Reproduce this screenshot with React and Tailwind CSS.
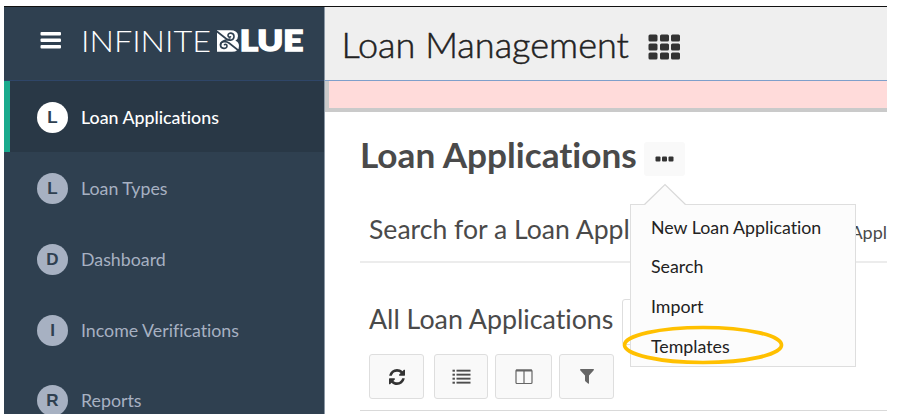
const navItems = [
  { letter: "L", label: "Loan Types", height: "h-[71px]" },
  { letter: "D", label: "Dashboard", height: "h-[70px]" },
  { letter: "I", label: "Income Verifications", height: "h-[72px]" },
  { letter: "R", label: "Reports", height: "h-[69px]" },
];

function Logo() {
  return (
    <svg width="230" height="44" viewBox="0 -8 230 44" className="-mt-[8px] ml-[19px] block overflow-visible" fill="#fff">
      <text x="0" y="24.5" fontFamily="Lato, sans-serif" fontWeight="300" fontSize="30" textLength="130" lengthAdjust="spacingAndGlyphs">INFINITE</text>
      <path d="M136 3.300H149q8 0 8 5.700 0 3.500-2.600 4.700 3.600 1.300 3.600 5.300 0 5.800-7 5.800h-15z" />
      <g fill="none" stroke="#2f4050" strokeWidth="1.600" strokeLinecap="round">
        <path d="M136 4.500l9.500 7.500c3 2.300 7.500 1.300 7.500-2.500 0-4.200-6-4.500-6-1 0 1.500 1.500 2 2.500 1.300" />
        <path d="M157.500 23.500l-9.500-7.500c-3-2.300-8.500-1.800-8.500 2 0 4.200 6.500 4.500 6.500 1 0-1.500-1.500-2-2.500-1.300" />
        <path d="M139.500 18q0-3 4-4.500l5.500-1.500" />
      </g>
      <text x="158.800" y="24.300" fontFamily="Lato, sans-serif" fontWeight="900" fontSize="28.500" stroke="#fff" strokeWidth="1.600" textLength="63.500" lengthAdjust="spacingAndGlyphs">LUE</text>
    </svg>
  );
}

function Letter({ children, active }) {
  return (
    <span className={`flex h-[31px] w-[31px] shrink-0 items-center justify-center rounded-full font-['Liberation_Sans',sans-serif] text-[17px] leading-none font-bold text-[#2f4050] ${active ? "bg-white" : "bg-[#a7b1c2]"}`}>
      {children}
    </span>
  );
}

function Sidebar() {
  return (
    <aside className="flex w-[320.500px] shrink-0 flex-col border-r border-[#8b98a5] bg-[#2f4050]">
      <div className="flex h-[74px] shrink-0 items-start border-b border-[#2f4668] pt-[20px] pl-[36px]">
        <svg width="22" height="20" viewBox="0 0 22 20" className="mt-[4px]" fill="#fff">
          <rect x="0.500" y="1" width="20.500" height="3.600" rx="1" />
          <rect x="0.500" y="7.500" width="20.500" height="3.600" rx="1" />
          <rect x="0.500" y="14" width="20.500" height="3.600" rx="1" />
        </svg>
        <Logo />
      </div>
      <nav className="text-[17.800px] text-[#a7b1c2]">
        <div className="flex h-[71px] items-center gap-[13px] border-l-[6px] border-[#19aa8d] bg-[#293846] pt-[2px] pl-[27px] font-medium text-white">
          <Letter active>L</Letter>
          <span>Loan Applications</span>
        </div>
        {navItems.map((item) => (
          <div key={item.label} className={`flex items-center gap-[13px] pt-[2px] pl-[33px] ${item.height}`}>
            <Letter>{item.letter}</Letter>
            <span>{item.label}</span>
          </div>
        ))}
      </nav>
    </aside>
  );
}

function GridIcon() {
  return (
    <svg width="33" height="26" viewBox="0 0 33 26" fill="#333" className="mt-[7px] ml-[19px]">
      {[0.5, 9.5, 18.5].map((y) =>
        [0.5, 12, 23].map((x) => <rect key={`${x}-${y}`} x={x} y={y} width="9" height="7" rx="1.500" />)
      )}
    </svg>
  );
}

function RefreshIcon() {
  return (
    <svg width="16" height="16" viewBox="0 0 1536 1536" fill="#333">
      <path d="M1511 928q0 5-1 7-64 268-268 434.500T764 1536q-146 0-282.500-55T238 1324l-129 129q-19 19-45 19t-45-19-19-45V960q0-26 19-45t45-19h448q26 0 45 19t19 45-19 45l-137 137q71 66 161 102t187 36q134 0 250-65t186-179q11-17 53-117 8-23 30-23h192q13 0 22.500 9.500t9.500 22.500zm25-800v448q0 26-19 45t-45 19h-448q-26 0-45-19t-19-45 19-45l138-138Q969 256 768 256q-134 0-250 65T332 500q-11 17-53 117-8 23-30 23H50q-13 0-22.500-9.500T18 608v-7q65-268 270-434.500T768 0q146 0 284 55.500T1297 212l130-129q19-19 45-19t45 19 19 45z" />
    </svg>
  );
}

function ListIcon() {
  return (
    <svg width="19" height="16" viewBox="0 0 19 16" fill="#4d4d4d">
      {[0.7, 4.7, 8.7, 12.7].map((y) => (
        <g key={y}>
          <rect x="0.500" y={y} width="2.400" height="2" />
          <rect x="4.500" y={y} width="14" height="1.900" />
        </g>
      ))}
    </svg>
  );
}

function ColumnsIcon() {
  return (
    <svg width="18" height="16" viewBox="0 0 18 16" fill="none" stroke="#666">
      <rect x="1" y="1" width="16" height="13.500" rx="1" strokeWidth="1.200" />
      <path d="M1 1.500h16" strokeWidth="2" />
      <path d="M9 1v13.500" strokeWidth="1.200" />
    </svg>
  );
}

function FilterIcon() {
  return (
    <svg width="14" height="15" viewBox="0 0 14 15" fill="#666">
      <path d="M.5 0h13q.7.500.2 1.200L9 6.500v7.700q-.3.800-1 .4L5.300 12.200 5 11.500v-5L.2 1.200Q0 .3.500 0z" />
    </svg>
  );
}

const toolButton = "flex h-[45px] items-center justify-center rounded-[3px] border border-[#dedede] bg-[#f9f9f9]";

function ActionsMenu() {
  return (
    <div className="absolute top-[41px] left-[-14.500px] z-10 w-[226px]">
      <svg width="42" height="22" viewBox="0 0 42 22" className="relative z-10 ml-[14px] block">
        <path d="M.5 22L21 1.500 41.500 22z" fill="#fcfcfc" />
        <path d="M.5 21.500L21 1.500l20.500 20" fill="none" stroke="#d9d9d9" strokeWidth="1.200" />
      </svg>
      <ul className="-mt-px flex h-[163px] flex-col border border-[#dedede] bg-[#fcfcfc] pt-[2px] pl-[20.500px] text-[17.800px] font-normal text-[#222]">
        <li className="flex h-[40px] items-center">New Loan Application</li>
        <li className="flex h-[39px] items-center">Search</li>
        <li className="flex h-[40px] items-center">Import</li>
        <li className="flex h-[40px] items-center">Templates</li>
      </ul>
      <svg width="162" height="40" viewBox="0 0 162 40" className="absolute top-[142px] left-[-8px]">
        <ellipse cx="81" cy="20" rx="78.500" ry="17.500" fill="none" stroke="#ffc000" strokeWidth="3.700" />
      </svg>
    </div>
  );
}

export default function App() {
  return (
    <div className="h-[418px] w-[901px] overflow-hidden bg-white pt-[6px] pl-[4px] font-[Lato,sans-serif] [font-variant-ligatures:none]">
      <div className="flex h-[408px] w-[883px] overflow-hidden border-t border-[#111]">
        <Sidebar />
        <main className="min-w-0 flex-1">
          <header className="flex h-[74px] items-start border-b border-[#7f9fca] bg-[#efefef] pt-[20px] pl-[17px]">
            <h1 className="-mt-px w-[287px] text-[36.100px] leading-[36px] font-light whitespace-nowrap text-[#222] [-webkit-text-stroke:0.5px_#222]">Loan Management</h1>
            <GridIcon />
          </header>
          <div className="h-[31px] border-b-4 border-l-4 border-[#cacaca] bg-[#ffdbda]" />
          <div className="pl-[35.500px]">
            <div className="flex h-[88px] items-start pt-[30px]">
              <h2 className="-mt-px w-[276px] text-[35.200px] leading-[27px] font-bold whitespace-nowrap text-[#4a4a4a]">Loan Applications</h2>
              <div className="relative ml-[8px] flex h-[34px] w-[41px] items-center justify-center rounded-[3px] bg-[#f9f9f9]">
                <svg width="19" height="6" viewBox="0 0 19 6" fill="#333">
                  <rect x="0.500" y="0.500" width="5" height="5" rx="1" />
                  <rect x="7" y="0.500" width="5" height="5" rx="1" />
                  <rect x="13.500" y="0.500" width="5" height="5" rx="1" />
                </svg>
                <ActionsMenu />
              </div>
            </div>
            <div className="flex h-[63px] items-center justify-between border-b-2 border-[#ececec] pl-[9px] whitespace-nowrap text-[#4a4a4a]">
              <h3 className="-mt-[2px] text-[26.600px]">Search for a Loan Appl</h3>
              <span className="mt-[4px] text-[18px]">Appl</span>
            </div>
            <div className="flex h-[91px] items-start pt-[36px] pl-[9px]">
              <h3 className="w-[244px] text-[26.800px] leading-[41px] whitespace-nowrap text-[#4a4a4a]">All Loan Applications</h3>
              <div className="ml-[9px] h-[46px] w-[150px] rounded-[3px] border border-[#dedede]" />
            </div>
            <div className="flex h-[57px] border-b border-[#d9d9d9] pl-[9px]">
              <div className={`${toolButton} w-[55px]`}><RefreshIcon /></div>
              <div className={`${toolButton} ml-[10px] w-[54px]`}><ListIcon /></div>
              <div className={`${toolButton} ml-[7px] w-[57px]`}><ColumnsIcon /></div>
              <div className={`${toolButton} ml-[7px] w-[55px]`}><FilterIcon /></div>
            </div>
          </div>
        </main>
      </div>
    </div>
  );
}
